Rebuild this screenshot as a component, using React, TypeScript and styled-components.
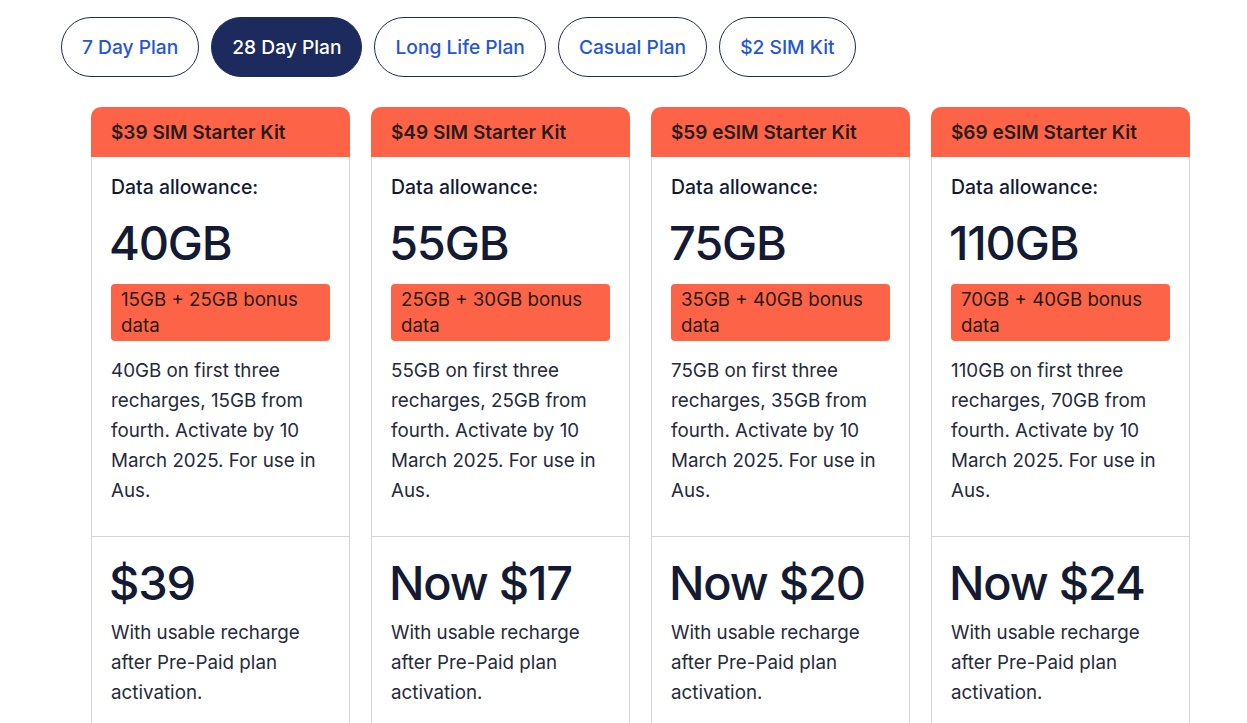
import React from "react";
import styled, { createGlobalStyle } from "styled-components";

const GlobalStyle = createGlobalStyle`
  body {
    margin: 0;
    background: #ffffff;
    font-family: Inter, "Noto Sans", sans-serif;
    color: #141a33;
  }
`;

const Page = styled.div`
  padding: 17px 0 0 61px;
  height: 723px;
  overflow: hidden;
  box-sizing: border-box;
`;

const Tabs = styled.div`
  display: flex;
  gap: 12px;
`;

const Tab = styled.button<{ $active?: boolean }>`
  height: 60px;
  padding: 0 20px;
  border-radius: 30px;
  border: 1px solid #1c2a5e;
  background: ${(p) => (p.$active ? "#1c2a5e" : "#ffffff")};
  color: ${(p) => (p.$active ? "#ffffff" : "#2456d6")};
  font-family: inherit;
  font-size: 19.2px;
  font-weight: 500;
  cursor: pointer;
`;

const Cards = styled.div`
  display: flex;
  gap: 21px;
  margin: 30px 0 0 30px;
`;

const Card = styled.div`
  width: 259px;
  box-sizing: border-box;
  border: 1px solid #d4d4d4;
  border-top: none;
  border-radius: 10px 10px 0 0;
  flex-shrink: 0;
`;

const Header = styled.div`
  height: 50px;
  margin: 0 -1px;
  background: #fd6447;
  border-radius: 10px 10px 0 0;
  display: flex;
  align-items: center;
  padding: 0 20px;
  font-size: 19px;
  font-weight: 600;
  color: #2a1a1a;
`;

const Section = styled.div<{ $top: number; $bottom: number }>`
  padding: ${(p) => p.$top}px 19px ${(p) => p.$bottom}px 19px;
  & + & {
    border-top: 1px solid #d4d4d4;
  }
`;

const Label = styled.div`
  font-size: 19.4px;
  font-weight: 500;
  line-height: 30px;
`;

const Big = styled.div<{ $gap: number }>`
  font-size: 47px;
  font-weight: 500;
  line-height: 52px;
  letter-spacing: -1.2px;
  margin-top: ${(p) => p.$gap}px;
  margin-left: -2px;
`;

const Badge = styled.div`
  margin-top: 15px;
  background: #fd6447;
  border-radius: 4px;
  padding: 3px 10px 2px;
  font-size: 18.7px;
  line-height: 26px;
  color: #2a1a1a;
`;

const Text = styled.div<{ $gap: number }>`
  margin-top: ${(p) => p.$gap}px;
  font-size: 18.8px;
  line-height: 30px;
  color: #262a3a;
`;

const plans = [
  { kit: "$39 SIM Starter Kit", gb: "40GB", base: "15GB", bonus: "25GB", price: "$39" },
  { kit: "$49 SIM Starter Kit", gb: "55GB", base: "25GB", bonus: "30GB", price: "Now $17" },
  { kit: "$59 eSIM Starter Kit", gb: "75GB", base: "35GB", bonus: "40GB", price: "Now $20" },
  { kit: "$69 eSIM Starter Kit", gb: "110GB", base: "70GB", bonus: "40GB", price: "Now $24" },
];

const tabs = ["7 Day Plan", "28 Day Plan", "Long Life Plan", "Casual Plan", "$2 SIM Kit"];

export default function App() {
  return (
    <>
      <GlobalStyle />
      <Page>
        <Tabs>
          {tabs.map((t) => (
            <Tab key={t} $active={t === "28 Day Plan"}>
              {t}
            </Tab>
          ))}
        </Tabs>
        <Cards>
          {plans.map((p) => (
            <Card key={p.kit}>
              <Header>{p.kit}</Header>
              <Section $top={15} $bottom={30}>
                <Label>Data allowance:</Label>
                <Big $gap={15}>{p.gb}</Big>
                <Badge>
                  {p.base} + {p.bonus} bonus data
                </Badge>
                <Text $gap={15}>
                  {p.gb} on first three recharges, {p.base} from fourth. Activate by 10 March 2025. For use in
                  Aus.
                </Text>
              </Section>
              <Section $top={20} $bottom={30}>
                <Big $gap={0}>{p.price}</Big>
                <Text $gap={9}>With usable recharge after Pre-Paid plan activation.</Text>
              </Section>
            </Card>
          ))}
        </Cards>
      </Page>
    </>
  );
}
